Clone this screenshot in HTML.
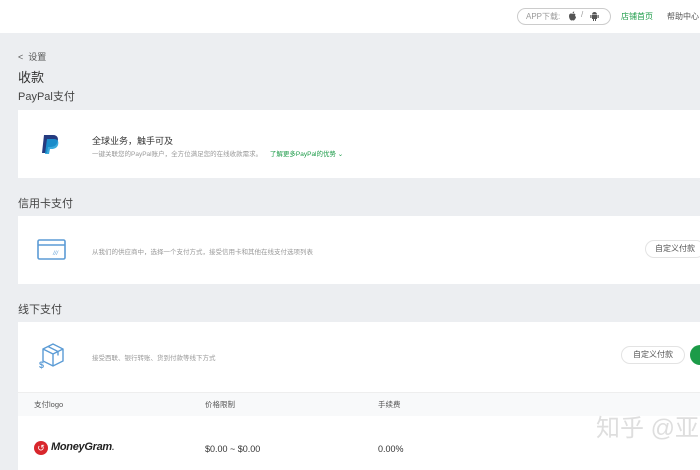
<!DOCTYPE html>
<html><head><meta charset="utf-8"><style>
*{margin:0;padding:0;box-sizing:border-box}
body{width:700px;height:470px;overflow:hidden;background:#eceef1;font-family:"Liberation Sans","Noto Sans CJK SC",sans-serif;color:#333;position:relative}
.top{position:absolute;left:0;top:0;width:700px;height:33px;background:#fff}
.pill{position:absolute;left:517px;top:8px;width:94px;height:17px;border:1px solid #ccc;border-radius:9px;font-size:8px;color:#999;line-height:15px;padding-left:8px}
.abs{position:absolute;white-space:nowrap}
.card{position:absolute;left:18px;width:682px;background:#fff}
.btn{position:absolute;border:1px solid #e3e3e3;border-radius:10px;font-size:8px;color:#555;text-align:center;line-height:16px;height:18px;width:56px}
</style></head><body>
<div class="top">
<div class="pill">APP下载:</div>
<svg class="abs" style="left:568px;top:11px" width="9" height="10" viewBox="0 0 9 10"><path d="M4.5 3C3 2 1 2.5 1 5s1.5 4.5 2.5 4.5c.5 0 .7-.3 1-.3s.5.3 1 .3C6.5 9.5 8 7 8 6 7 5.5 6.8 4 7.5 3.3 6.5 2.3 5.3 2.6 4.5 3zM4.5 2.5c0-1 .7-2 1.7-2 0 1-.7 2-1.7 2z" fill="#555"/></svg>
<div class="abs" style="left:581px;top:10px;font-size:8px;color:#999">/</div>
<svg class="abs" style="left:590px;top:11px" width="9" height="10" viewBox="0 0 9 10"><path d="M2 4h5v4H2zM2 3.5a2.5 2.5 0 015 0z" fill="#555"/><rect x="0.3" y="4" width="1.2" height="3" fill="#555"/><rect x="7.5" y="4" width="1.2" height="3" fill="#555"/><rect x="3" y="8" width="1" height="2" fill="#555"/><rect x="5" y="8" width="1" height="2" fill="#555"/></svg>
<div class="abs" style="left:621px;top:11px;font-size:8px;color:#1c9b48">店铺首页</div>
<div class="abs" style="left:667px;top:11px;font-size:8px;color:#555">帮助中心</div>
</div>
<div class="abs" style="left:18px;top:50px;font-size:9px;color:#555">&lt;&nbsp;&nbsp;设置</div>
<div class="abs" style="left:18px;top:67px;font-size:13px;color:#333">收款</div>
<div class="abs" style="left:18px;top:88px;font-size:11px;color:#444">PayPal支付</div>
<div class="card" style="top:110px;height:68px">
<svg class="abs" style="left:22px;top:24px" width="22" height="22" viewBox="0 0 22 22"><path d="M4 1h9c5 0 6 4 4 8-1 3-4 4-7 4H8l-1 6H2z" fill="#253b80"/><path d="M7 5h7c4 0 5 3 4 6-1 3-4 4-6 4h-2l-1 5H5z" fill="#179bd7" opacity=".85"/></svg>
<div class="abs" style="left:74px;top:24px;font-size:9px;color:#333">全球业务，触手可及</div>
<div class="abs" style="left:74px;top:38px;font-size:6.5px;color:#999">一键关联您的PayPal账户，全方位满足您的在线收款需求。 <span style="color:#1c9b48;margin-left:6px">了解更多PayPal的优势 ⌄</span></div>
</div>
<div class="abs" style="left:18px;top:195px;font-size:11px;color:#444">信用卡支付</div>
<div class="card" style="top:216px;height:68px">
<svg class="abs" style="left:19px;top:23px" width="30" height="22" viewBox="0 0 30 22"><rect x="1" y="1" width="27" height="19" rx="1.5" fill="none" stroke="#5b9bd5" stroke-width="1.6"/><line x1="1" y1="6" x2="28" y2="6" stroke="#5b9bd5" stroke-width="1.6"/><text x="16" y="16" font-size="6" fill="#5b9bd5" font-style="italic">///</text></svg>
<div class="abs" style="left:74px;top:30px;font-size:6.5px;color:#999">从我们的供应商中，选择一个支付方式，接受信用卡和其他在线支付选项列表</div>
<div class="btn" style="left:627px;top:24px;width:60px">自定义付款</div>
</div>
<div class="abs" style="left:18px;top:301px;font-size:11px;color:#444">线下支付</div>
<div class="card" style="top:322px;height:148px">
<svg class="abs" style="left:20px;top:20px" width="28" height="28" viewBox="0 0 28 28"><path d="M5 7l10-5 10 5v12l-10 5-10-5z M5 7l10 5 10-5 M15 12v12 M10 4.5l10 5v4" fill="none" stroke="#5b9bd5" stroke-width="1.4"/><text x="1" y="26" font-size="9" font-weight="bold" fill="#5b9bd5">$</text></svg>
<div class="abs" style="left:74px;top:30px;font-size:6.5px;color:#999">接受西联、银行转账、货到付款等线下方式</div>
<div class="btn" style="left:603px;top:24px;width:64px">自定义付款</div>
<div class="abs" style="left:672px;top:23px;width:30px;height:20px;border-radius:10px;background:#1c9b48"></div>
<div class="abs" style="left:0;top:70px;width:682px;height:24px;background:#f8f9fa;border-top:1px solid #eee"></div>
<div class="abs" style="left:16px;top:77px;font-size:7.5px;color:#555">支付logo</div>
<div class="abs" style="left:187px;top:77px;font-size:7.5px;color:#555">价格限制</div>
<div class="abs" style="left:360px;top:77px;font-size:7.5px;color:#555">手续费</div>
<div class="abs" style="left:16px;top:119px;width:14px;height:14px;border-radius:7px;background:#d8262c;color:#fff;font-size:9px;line-height:14px;text-align:center">↺</div>
<div class="abs" style="left:33px;top:119px;font-size:11px;font-weight:bold;font-style:italic;color:#222;letter-spacing:-.3px">MoneyGram<span style="font-weight:normal">.</span></div>
<div class="abs" style="left:187px;top:122px;font-size:9px;color:#333">$0.00 ~ $0.00</div>
<div class="abs" style="left:360px;top:122px;font-size:9px;color:#333">0.00%</div>
<div class="abs" style="left:578px;top:86px;font-size:24px;color:rgba(190,190,190,.5)">知乎 @亚</div>
</div>
</body></html>
